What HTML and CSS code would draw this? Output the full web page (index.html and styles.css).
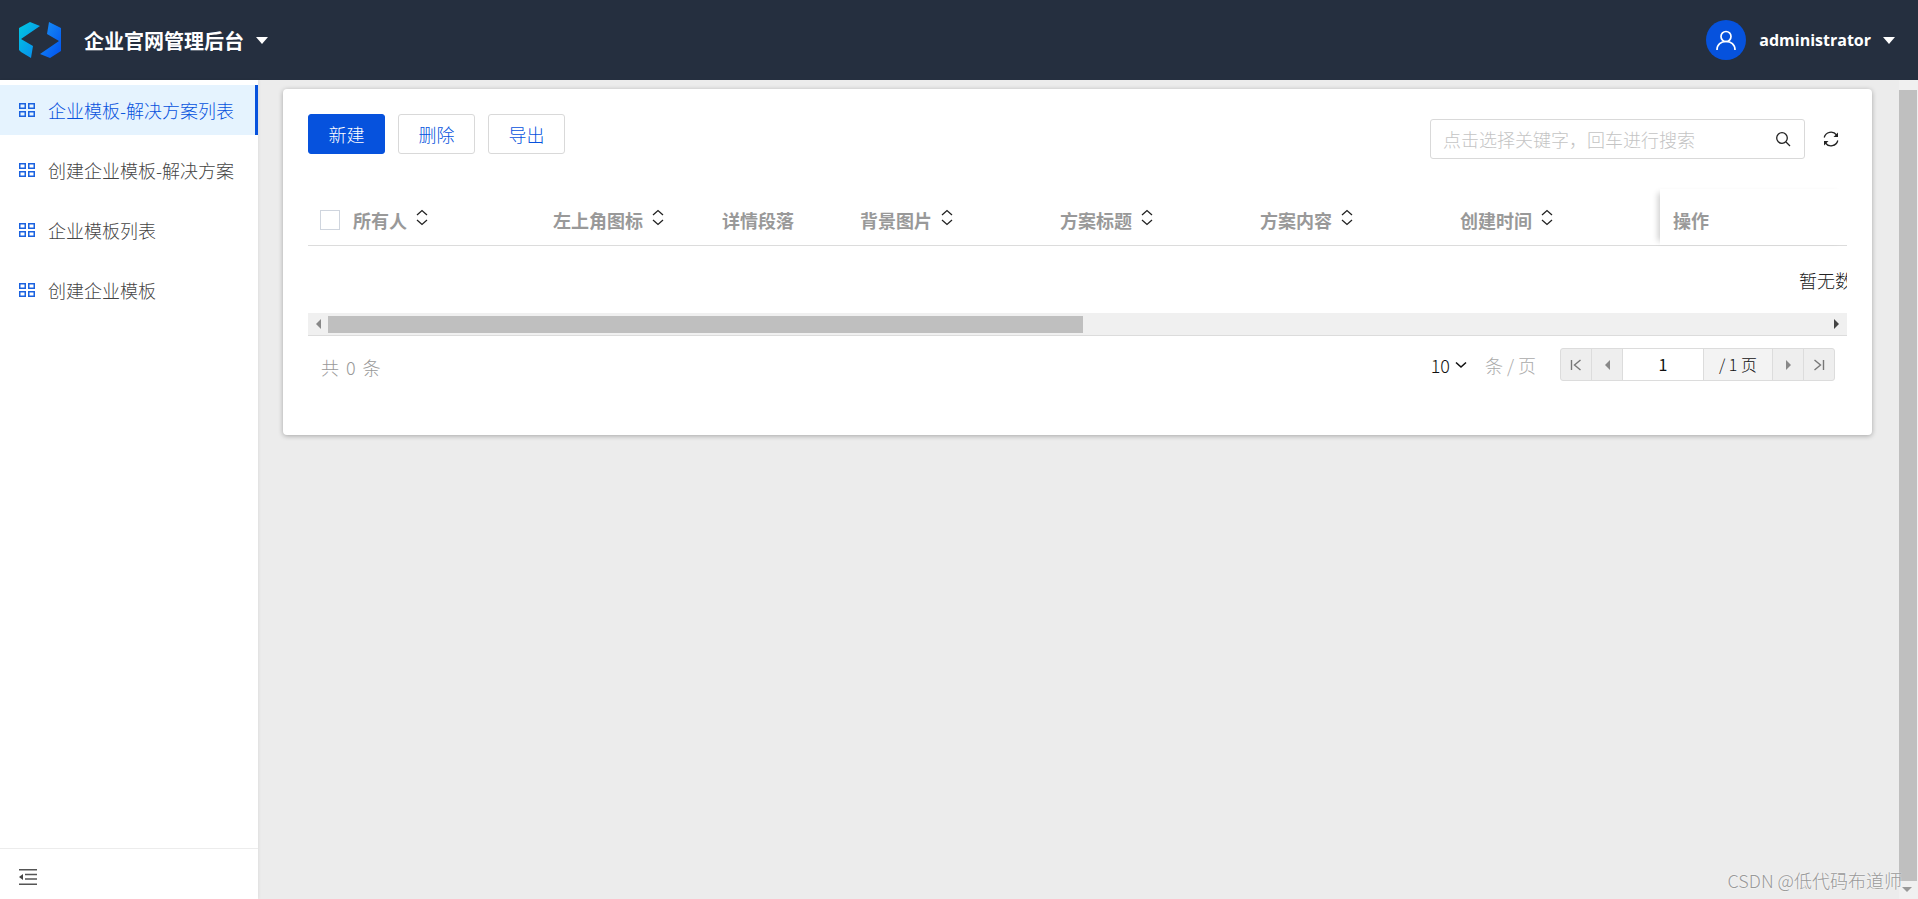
FILE: index.html
```html
<!DOCTYPE html>
<html lang="zh-CN">
<head>
  <meta charset="UTF-8" />
  <title>企业官网管理后台</title>
  <link rel="stylesheet" href="styles.css">
</head>
<body>

<header class="topbar">
  <div class="brand">
    <svg class="logo" viewBox="0 0 42 36">
      <defs>
        <linearGradient id="logoLeft" x1="0" y1="0" x2="1" y2="1">
          <stop offset="0" stop-color="#00c8e0"/>
          <stop offset="1" stop-color="#0a84f0"/>
        </linearGradient>
        <linearGradient id="logoRight" x1="0" y1="0" x2="1" y2="1">
          <stop offset="0" stop-color="#1a96f5"/>
          <stop offset="1" stop-color="#0050f0"/>
        </linearGradient>
      </defs>
      <path d="M0 6 L11 0 L21 4 L2 17 L14 24 L12 36 L2 30 L0 28 Z" fill="url(#logoLeft)"/>
      <path d="M42 6 L42 29 L31 36 L21 32 L40 19 L28 12 L30 0 Z" fill="url(#logoRight)"/>
    </svg>
    <span class="brand-title">企业官网管理后台</span>
    <span class="caret"></span>
  </div>
  <div class="user">
    <span class="avatar">
      <svg viewBox="0 0 24 24" width="24" height="24" fill="none" stroke="#fff" stroke-width="1.7">
        <circle cx="12" cy="8.5" r="5"/>
        <path d="M3 22 C3 16.5 7 13.5 12 13.5 C17 13.5 21 16.5 21 22"/>
      </svg>
    </span>
    <span class="user-name">administrator</span>
    <span class="caret"></span>
  </div>
</header>

<div class="layout">
  <aside class="sidebar">
    <nav class="menu">
      <a class="menu-item active"><svg class="menu-icon" viewBox="0 0 16 14"><use href="#grid"/></svg>企业模板-解决方案列表</a>
      <a class="menu-item"><svg class="menu-icon" viewBox="0 0 16 14"><use href="#grid"/></svg>创建企业模板-解决方案</a>
      <a class="menu-item"><svg class="menu-icon" viewBox="0 0 16 14"><use href="#grid"/></svg>企业模板列表</a>
      <a class="menu-item"><svg class="menu-icon" viewBox="0 0 16 14"><use href="#grid"/></svg>创建企业模板</a>
    </nav>
    <div class="collapse">
      <svg viewBox="0 0 18 16" width="18" height="16">
        <path d="M0 0.75H18M6 5.5H18M6 10H18M0 15.25H18" stroke="#555" stroke-width="1.5" fill="none"/>
        <path d="M4 5L0 8L4 11Z" fill="#444"/>
      </svg>
    </div>
  </aside>

  <main class="content">
    <div class="card">
      <div class="toolbar">
        <div class="actions">
          <button class="btn btn-primary">新建</button>
          <button class="btn">删除</button>
          <button class="btn">导出</button>
        </div>
        <div class="search-wrap">
          <div class="search">
            <span class="search-text">点击选择关键字，回车进行搜索</span>
            <svg viewBox="0 0 16 16" width="16" height="16" fill="none" stroke="#222" stroke-width="1.3">
              <circle cx="7" cy="7" r="5.3"/>
              <path d="M11 11L15 15"/>
            </svg>
          </div>
          <svg class="refresh" viewBox="0 0 16 16" width="16" height="16" fill="none" stroke="#222" stroke-width="1.3">
            <path d="M1.2 6.5A7 7 0 0 1 13.6 4"/>
            <path d="M14.8 9.5A7 7 0 0 1 2.4 12"/>
            <path d="M15 1.5V6H10.5Z" fill="#222" stroke="none"/>
            <path d="M1 14.5V10H5.5Z" fill="#222" stroke="none"/>
          </svg>
        </div>
      </div>

      <div class="table">
        <div class="table-head">
          <div class="cell"><span class="checkbox"></span></div>
          <div class="cell">所有人<svg class="sort" viewBox="0 0 12 17"><use href="#sort"/></svg></div>
          <div class="cell">左上角图标<svg class="sort" viewBox="0 0 12 17"><use href="#sort"/></svg></div>
          <div class="cell">详情段落</div>
          <div class="cell">背景图片<svg class="sort" viewBox="0 0 12 17"><use href="#sort"/></svg></div>
          <div class="cell">方案标题<svg class="sort" viewBox="0 0 12 17"><use href="#sort"/></svg></div>
          <div class="cell">方案内容<svg class="sort" viewBox="0 0 12 17"><use href="#sort"/></svg></div>
          <div class="cell">创建时间<svg class="sort" viewBox="0 0 12 17"><use href="#sort"/></svg></div>
          <div class="cell cell-fixed">操作</div>
        </div>
        <div class="table-empty"><span>暂无数据</span></div>
        <div class="hscroll">
          <span class="arrow arrow-left"></span>
          <div class="hscroll-track"><div class="hscroll-thumb"></div></div>
          <span class="arrow arrow-right"></span>
        </div>
      </div>

      <div class="table-foot">
        <span class="total">共 0 条</span>
        <div class="pagination">
          <span class="page-size">10<svg viewBox="0 0 12 8" width="12" height="8" fill="none" stroke="#111" stroke-width="1.6"><path d="M1 1.5L6 6L11 1.5"/></svg></span>
          <span class="per-page">条 / 页</span>
          <div class="pager">
            <span class="pager-btn"><svg viewBox="0 0 12 12" width="12" height="12" fill="none" stroke="#777" stroke-width="1.4"><path d="M1.5 1V11M10.5 1L4.5 6L10.5 11"/></svg></span>
            <span class="pager-btn"><span class="arrow arrow-left"></span></span>
            <span class="pager-input">1</span>
            <span class="pager-count">/ 1 页</span>
            <span class="pager-btn"><span class="arrow arrow-right"></span></span>
            <span class="pager-btn"><svg viewBox="0 0 12 12" width="12" height="12" fill="none" stroke="#777" stroke-width="1.4"><path d="M10.5 1V11M1.5 1L7.5 6L1.5 11"/></svg></span>
          </div>
        </div>
      </div>
    </div>
  </main>

  <div class="page-scroll">
    <div class="page-scroll-thumb"></div>
    <span class="page-scroll-down"></span>
  </div>
</div>

<div class="watermark">CSDN @低代码布道师</div>

<svg class="defs" width="0" height="0">
  <symbol id="grid" viewBox="0 0 16 14">
    <g fill="none" stroke="#1a62e0" stroke-width="1.5">
      <rect x="0.75" y="0.75" width="5.5" height="4.5"/>
      <rect x="9.75" y="0.75" width="5.5" height="4.5"/>
      <rect x="0.75" y="8.75" width="5.5" height="4.5"/>
      <rect x="9.75" y="8.75" width="5.5" height="4.5"/>
    </g>
  </symbol>
  <symbol id="sort" viewBox="0 0 12 17">
    <path d="M1 6L6 1.5L11 6M1 11L6 15.5L11 11" fill="none" stroke="#222" stroke-width="1.3"/>
  </symbol>
</svg>

</body>
</html>
```

FILE: styles.css
```css
html, body {
  margin: 0;
  padding: 0;
  height: 100%;
  overflow: hidden;
  background: #ececec;
  font-family: "Noto Sans CJK SC", "Liberation Sans", sans-serif;
  color: #333;
}

body {
  display: flex;
  flex-direction: column;
  position: relative;
}

.defs {
  position: absolute;
}

/* top bar */
.topbar {
  height: 80px;
  flex: none;
  background: #252f3f;
  color: #fff;
  display: flex;
  align-items: center;
  justify-content: space-between;
  padding: 0 23px 0 19px;
}

.brand, .user {
  display: flex;
  align-items: center;
}

.logo {
  width: 42px;
  height: 36px;
}

.brand-title {
  margin-left: 23px;
  font-size: 20px;
  font-weight: 700;
}

.brand .caret {
  margin-left: 12px;
}

.caret {
  width: 0;
  height: 0;
  border-left: 6px solid transparent;
  border-right: 6px solid transparent;
  border-top: 7px solid #fff;
}

.avatar {
  width: 40px;
  height: 40px;
  border-radius: 50%;
  background: #0652dd;
  display: flex;
  align-items: center;
  justify-content: center;
}

.user-name {
  margin-left: 13px;
  font-family: "Open Sans", sans-serif;
  font-size: 16px;
  font-weight: 700;
}

.user .caret {
  margin-left: 12px;
}

/* layout */
.layout {
  flex: 1;
  display: flex;
  min-height: 0;
}

.sidebar {
  width: 258px;
  flex: none;
  background: #fff;
  display: flex;
  flex-direction: column;
  box-shadow: 1px 0 3px rgba(0, 0, 0, 0.06);
}

.menu {
  flex: 1;
  padding-top: 5px;
  display: flex;
  flex-direction: column;
  gap: 10px;
}

.menu-item {
  height: 50px;
  display: flex;
  align-items: center;
  padding-left: 19px;
  font-size: 18px;
  font-weight: 300;
  color: #444;
}

.menu-item.active {
  background: #e5f3fe;
  color: #0652dd;
  box-shadow: inset -3px 0 0 #0652dd;
}

.menu-icon {
  width: 16px;
  height: 14px;
  margin-right: 13px;
}

.collapse {
  height: 51px;
  border-top: 1px solid #ececec;
  box-sizing: border-box;
  padding: 17px 19px 0;
}

.content {
  flex: 1;
  min-width: 0;
  padding: 9px 27px 0 25px;
}

/* card */
.card {
  height: 346px;
  box-sizing: border-box;
  background: #fff;
  border-radius: 4px;
  box-shadow: 0 1px 5px rgba(0, 0, 0, 0.3);
  padding: 25px 25px 0;
}

.toolbar {
  display: flex;
  justify-content: space-between;
  height: 75px;
}

.actions {
  display: flex;
  gap: 13px;
}

.btn {
  width: 77px;
  height: 40px;
  padding: 0;
  background: #fff;
  border: 1px solid #d9d9d9;
  border-radius: 3px;
  color: #0652dd;
  font-family: inherit;
  font-size: 18px;
  font-weight: 300;
}

.btn-primary {
  background: #0652dd;
  border-color: #0652dd;
  color: #fff;
}

.search-wrap {
  display: flex;
  align-items: center;
  height: 40px;
  margin-top: 5px;
  padding-right: 8px;
}

.search {
  width: 375px;
  height: 40px;
  box-sizing: border-box;
  border: 1px solid #d9d9d9;
  border-radius: 3px;
  display: flex;
  align-items: center;
  justify-content: space-between;
  padding: 0 13px 0 12px;
}

.search-text {
  font-size: 18px;
  font-weight: 300;
  color: #c4c4c4;
}

.refresh {
  margin-left: 18px;
}

/* table */
.table-head {
  height: 57px;
  box-sizing: border-box;
  border-bottom: 1px solid #dcdcdc;
  display: grid;
  grid-template-columns: 45px 200px 169px 138px 200px 200px 200px 200px 1fr;
  padding-left: 0;
}

.cell {
  display: flex;
  align-items: center;
  font-size: 18px;
  font-weight: 700;
  color: #999;
  padding-top: 6px;
}

.cell:first-child {
  padding-left: 12px;
}

.cell-fixed {
  padding-left: 13px;
  position: relative;
  box-shadow: -6px 0 6px -4px rgba(0, 0, 0, 0.2);
}

.checkbox {
  width: 20px;
  height: 20px;
  box-sizing: border-box;
  border: 1px solid #cfd5de;
}

.sort {
  width: 12px;
  height: 17px;
  margin: -6px 0 0 9px;
}

.table-empty {
  height: 67px;
  overflow: hidden;
  display: flex;
  align-items: center;
  padding-left: 1491px;
  white-space: nowrap;
  font-size: 18px;
  font-weight: 300;
  color: #222;
}

.hscroll {
  height: 22px;
  background: #f0f0f0;
  border-bottom: 1px solid #dcdcdc;
  display: flex;
  align-items: center;
}

.hscroll-track {
  flex: 1;
  height: 17px;
  margin: 0 7px;
}

.hscroll-thumb {
  width: 755px;
  height: 17px;
  background: #bfbfbf;
}

.arrow {
  width: 0;
  height: 0;
  border-top: 5px solid transparent;
  border-bottom: 5px solid transparent;
  flex: none;
}

.arrow-left {
  border-right: 5px solid #888;
  margin-left: 8px;
}

.arrow-right {
  border-left: 5px solid #444;
  margin-right: 8px;
}

.table-foot {
  display: flex;
  justify-content: space-between;
  padding: 12px 12px 0 13px;
}

.total {
  margin-top: 6px;
  font-size: 18px;
  font-weight: 300;
  word-spacing: 3px;
  color: #999;
}

.pagination {
  display: flex;
  align-items: center;
  height: 33px;
}

.page-size {
  display: flex;
  align-items: center;
  gap: 5px;
  font-size: 18px;
  font-weight: 300;
  color: #111;
}

.per-page {
  margin: 0 24px 0 18px;
  font-size: 18px;
  font-weight: 300;
  color: #aaa;
}

.pager {
  display: flex;
  height: 33px;
  box-sizing: border-box;
  border: 1px solid #dcdcdc;
  border-radius: 3px;
  background: #eee;
}

.pager-btn {
  width: 30px;
  display: flex;
  align-items: center;
  justify-content: center;
  border-right: 1px solid #dcdcdc;
}

.pager-btn:last-child {
  border-right: none;
}

.pager-btn .arrow {
  margin: 0;
}

.pager-btn .arrow-right {
  border-left-color: #888;
}

.pager-input {
  width: 80px;
  background: #fff;
  border-right: 1px solid #dcdcdc;
  text-align: center;
  font-size: 16px;
  line-height: 31px;
  color: #111;
}

.pager-count {
  width: 68px;
  background: #f3f3f3;
  border-right: 1px solid #dcdcdc;
  text-align: center;
  font-size: 16px;
  font-weight: 300;
  line-height: 31px;
  color: #111;
}

/* page scrollbar */
.page-scroll {
  width: 19px;
  flex: none;
  display: flex;
  flex-direction: column;
  align-items: flex-start;
  background: #f0f0f0;
  padding-top: 10px;
  box-sizing: border-box;
}

.page-scroll-thumb {
  width: 18px;
  height: 791px;
  background: #bfbfbf;
}

.page-scroll-down {
  margin: 6px 0 0 3px;
  width: 0;
  height: 0;
  border-left: 5px solid transparent;
  border-right: 5px solid transparent;
  border-top: 5px solid #999;
}

.watermark {
  position: absolute;
  right: 16px;
  bottom: 6px;
  font-size: 18px;
  font-weight: 300;
  color: #999;
  text-shadow: 0 0 2px #fff;
}
```
